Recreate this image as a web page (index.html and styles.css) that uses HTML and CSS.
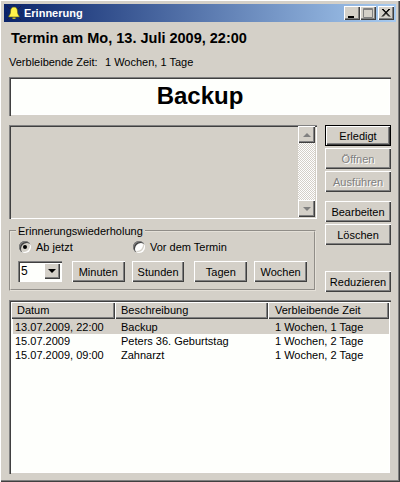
FILE: index.html
```html
<!DOCTYPE html>
<html lang="de">
<head>
<meta charset="utf-8">
<title>Erinnerung</title>
<link rel="stylesheet" href="styles.css">
</head>
<body>
<div class="window">
  <div class="titlebar">
    <svg class="bell" width="16" height="16" viewBox="0 0 16 16">
      <path d="M1 1l3 3M15 1l-3 3M1 15l2-2M15 15l-2-2M8 0v1M0 8h1M15 8h1" stroke="#1a1a50" fill="none"/>
      <path d="M8 2c-2.500 0-3.500 2-3.500 4.500 0 2-.8 3.500-1.800 4.500v1h10.600v-1c-1-1-1.800-2.500-1.800-4.500C11.500 4 10.500 2 8 2z" fill="#fff34a" stroke="#5a5a10" stroke-width=".6"/>
      <path d="M6.500 12.500h3v1.500h-3z" fill="#c8b820"/>
    </svg>
    <span class="title">Erinnerung</span>
    <div class="controls">
      <button class="ctl" aria-label="Minimieren"><svg width="14" height="12" viewBox="0 0 14 12"><path d="M3 9h6v2H3z" fill="#000"/></svg></button>
      <button class="ctl ctl-max" aria-label="Maximieren"><svg width="14" height="12" viewBox="0 0 14 12"><path d="M2.500 1.500h9v9h-9zM2 2.500h10" fill="none" stroke="#808080"/></svg></button>
      <button class="ctl ctl-close" aria-label="Schliessen"><svg width="14" height="12" viewBox="0 0 14 12"><path d="M3 2l7 7.500M4 2l7 7.500M10 2L3 9.500M11 2L4 9.500" fill="none" stroke="#000"/></svg></button>
    </div>
  </div>
  <div class="content">
    <h1 class="heading">Termin am Mo, 13. Juli 2009, 22:00</h1>
    <div class="remaining"><span class="remaining-label">Verbleibende Zeit:</span><span>1 Wochen, 1 Tage</span></div>
    <div class="subject">Backup</div>
    <div class="main">
      <div class="left">
        <div class="memo">
          <div class="scrollbar">
            <div class="sb-btn"><span class="tri tri-up"></span></div>
            <div class="sb-track"></div>
            <div class="sb-btn"><span class="tri tri-down"></span></div>
          </div>
        </div>
        <fieldset class="group">
          <legend class="legend">Erinnerungswiederholung</legend>
          <div class="radios">
            <label class="radio-row"><span class="radio radio-on"></span>Ab jetzt</label>
            <label class="radio-row"><span class="radio"></span>Vor dem Termin</label>
          </div>
          <div class="repeat">
            <div class="combo"><span class="combo-value">5</span><span class="combo-btn"><span class="tri tri-down tri-black"></span></span></div>
            <button class="btn btn-unit">Minuten</button>
            <button class="btn btn-unit">Stunden</button>
            <button class="btn btn-unit btn-far">Tagen</button>
            <button class="btn btn-unit">Wochen</button>
          </div>
        </fieldset>
      </div>
      <div class="right">
        <button class="btn btn-default">Erledigt</button>
        <button class="btn btn-off" disabled>Öffnen</button>
        <button class="btn btn-off" disabled>Ausführen</button>
        <button class="btn btn-split">Bearbeiten</button>
        <button class="btn">Löschen</button>
        <button class="btn btn-bottom">Reduzieren</button>
      </div>
    </div>
    <div class="list">
      <div class="list-head">
        <div class="hcell hcell-date">Datum</div>
        <div class="hcell hcell-desc">Beschreibung</div>
        <div class="hcell hcell-left">Verbleibende Zeit</div>
      </div>
      <div class="row row-selected"><span>13.07.2009, 22:00</span><span>Backup</span><span>1 Wochen, 1 Tage</span></div>
      <div class="row"><span>15.07.2009</span><span>Peters 36. Geburtstag</span><span>1 Wochen, 2 Tage</span></div>
      <div class="row"><span>15.07.2009, 09:00</span><span>Zahnarzt</span><span>1 Wochen, 2 Tage</span></div>
    </div>
  </div>
</div>
</body>
</html>
```
FILE: styles.css
```css
* { box-sizing: border-box; }
html, body { margin: 0; padding: 0; }
body { background: #d4d0c8; font: 11px/14px "Liberation Sans", Arial, sans-serif; color: #000; }

.window {
  width: 400px; height: 482px; padding: 4px; background: #d4d0c8;
  box-shadow: inset 1px 1px #fff, inset -1px -1px #404040, inset -2px -2px #808080;
  display: flex; flex-direction: column;
}
.titlebar {
  height: 18px; flex: none; display: flex; align-items: center; padding: 0 2px 0 2px;
  background: linear-gradient(90deg, #0a246a, #a6caf0);
  color: #fff; font-weight: bold; font-size: 11px;
}
.bell { flex: none; margin-right: 2px; }
.controls { margin-left: auto; display: flex; }
.ctl {
  width: 16px; height: 14px; padding: 0; border: 0; background: #d4d0c8; display: flex; align-items: center; justify-content: center;
  box-shadow: inset 1px 1px #fff, inset -1px -1px #404040, inset -2px -2px #808080;
}
.ctl-close { margin-left: 2px; }

.content { flex: 1; padding: 0 5px; display: flex; flex-direction: column; min-height: 0; }
.heading { margin: 8px 0 0 2px; font-size: 14.5px; line-height: 16px; font-weight: bold; }
.remaining { margin-top: 9px; height: 14px; display: flex; }
.remaining-label { width: 96px; }
.subject {
  margin-top: 8px; height: 39px; background: #fefffc; text-align: center;
  font-size: 24px; line-height: 38px; font-weight: bold;
  box-shadow: inset 1px 1px #808080, inset 2px 2px #404040, inset -1px -1px #d4d0c8, inset -2px -2px #fff;
}

.main { margin-top: 9px; display: flex; gap: 8px; }
.left { width: 308px; flex: none; }
.memo {
  height: 94px; padding: 1px 2px 2px 2px; display: flex; justify-content: flex-end;
  box-shadow: inset 1px 1px #808080, inset 2px 2px #404040, inset -1px -1px #fff;
}
.scrollbar { width: 17px; display: flex; flex-direction: column; }
.sb-btn {
  height: 17px; flex: none; background: #d4d0c8; display: flex; align-items: center; justify-content: center;
  box-shadow: inset 1px 1px #fff, inset -1px -1px #404040, inset -2px -2px #808080;
}
.sb-track {
  flex: 1;
  background-color: #fff;
  background-image: conic-gradient(#d4d0c8 25%, #fff 0 50%, #d4d0c8 0 75%, #fff 0);
  background-size: 2px 2px;
}
.tri { width: 0; height: 0; border-left: 4px solid transparent; border-right: 4px solid transparent; }
.tri-up { border-bottom: 4px solid #808080; }
.tri-down { border-top: 4px solid #808080; }
.tri-black { border-top-color: #000; }

.group {
  margin: 5px 0 0; padding: 2px 7px 8px; width: 307px; height: 67px;
  border: 2px groove #e4e0d8; min-width: 0;
}
.legend { margin-left: -2px; padding: 0 2px; line-height: 14px; }
.radios { display: grid; grid-template-columns: 114px 1fr; height: 14px; margin-bottom: 7px; }
.radio-row { display: flex; align-items: center; gap: 5px; padding-left: 1px; }
.radio {
  width: 12px; height: 12px; border-radius: 50%; background: #fff; flex: none;
  box-shadow: inset 1px 1px #808080, inset 2px 2px #404040, inset -1px -1px #fff, inset -2px -2px #d4d0c8;
  display: flex; align-items: center; justify-content: center;
}
.radio-on { background: #d4d0c8; }
.radio-on::after { content: ""; width: 4px; height: 4px; border-radius: 50%; background: #000; }

.repeat { display: flex; gap: 7px; height: 20px; }
.combo {
  width: 44px; height: 21px; padding: 2px; background: #fefffc; display: flex; margin-right: 3px;
  box-shadow: inset 1px 1px #808080, inset 2px 2px #404040, inset -1px -1px #fff;
}
.combo-value { flex: 1; padding-left: 1px; line-height: 16px; font-size: 12px; }
.combo-btn {
  width: 16px; height: 16px; background: #d4d0c8; display: flex; align-items: center; justify-content: center;
  box-shadow: inset 1px 1px #fff, inset -1px -1px #404040, inset -2px -2px #808080;
}

.btn {
  width: 66px; height: 21px; padding: 0; border: 0; background: #d4d0c8; color: #000;
  font: 11px/14px "Liberation Sans", Arial, sans-serif;
  box-shadow: inset 1px 1px #fff, inset -1px -1px #404040, inset -2px -2px #808080;
}
.btn-unit { width: 53px; }
.btn-far { margin-left: 3px; }
.right { width: 66px; flex: none; display: flex; flex-direction: column; gap: 2px; }
.btn-default {
  box-shadow: inset 0 0 0 1px #000, inset 2px 2px #fff, inset -2px -2px #404040, inset -3px -3px #808080;
}
.btn-off { color: #808080; text-shadow: 1px 1px #fff; }
.btn-split { margin-top: 7px; }
.btn-bottom { margin-top: 24px; }

.list {
  margin-top: 8px; height: 174px; background: #fefffc; padding: 2px;
  box-shadow: inset 1px 1px #808080, inset 2px 2px #404040, inset -1px -1px #d4d0c8, inset -2px -2px #fff;
}
.list-head { display: grid; grid-template-columns: 104px 153px 1fr; height: 17px; }
.hcell {
  background: #d4d0c8; padding-left: 6px; line-height: 17px;
  box-shadow: inset 1px 1px #fff, inset -1px -1px #404040, inset -2px -2px #808080;
}
.hcell-left { padding-left: 7px; }
.row { display: grid; grid-template-columns: 106px 154px 1fr; height: 14px; margin: 0 0 0 2px; padding-left: 2px; line-height: 14px; }
.row-selected { height: 15px; padding-top: 1px; background: #d4d0c8; }
```
